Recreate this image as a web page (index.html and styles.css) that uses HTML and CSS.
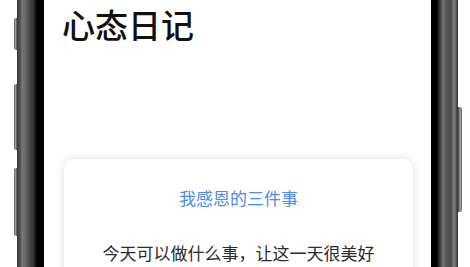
FILE: index.html
```html
<!DOCTYPE html>
<html lang="zh">
<head>
    <meta charset="UTF-8">
    <meta name="viewport" content="width=device-width, initial-scale=1.0">
    <title>心态日记</title>
    <link rel="stylesheet" href="styles.css">
</head>
<body>
    <div class="stage">
        <div class="side-btns left">
            <span class="side-btn b1"></span>
            <span class="side-btn b2"></span>
            <span class="side-btn b3"></span>
        </div>
        <div class="bezel bezel-left"></div>

        <div class="screen">
            <h1 class="title">心态日记</h1>

            <div class="card">
                <div class="card-head">我感恩的三件事</div>
                <div class="card-line">今天可以做什么事，让这一天很美好</div>
            </div>
        </div>

        <div class="bezel bezel-right"></div>
        <div class="side-btns right">
            <span class="side-btn r1"></span>
        </div>
    </div>
</body>
</html>
```

FILE: styles.css
```css
* {
    box-sizing: border-box;
    margin: 0;
    padding: 0;
}

body {
    width: 470px;
    height: 267px;
    overflow: hidden;
    background: #fff;
    font-family: "Noto Sans CJK SC", "Noto Sans", sans-serif;
}

.stage {
    display: flex;
    height: 267px;
    padding-left: 14px;
}

/* боковые кнопки телефона */
.side-btns {
    width: 3px;
    display: flex;
    flex-direction: column;
}

.side-btns.right {
    width: 4px;
}

.side-btn {
    display: block;
    width: 100%;
    background: linear-gradient(90deg, #5a5a5a, #9a9a9a 50%, #4a4a4a);
    border-radius: 2px 0 0 2px;
}

.side-btns.right .side-btn {
    border-radius: 0 2px 2px 0;
    background: linear-gradient(90deg, #3a3a3a, #a0a0a0 50%, #6a6a6a);
}

.b1 { margin-top: 18px; height: 32px; }
.b2 { margin-top: 34px; height: 66px; }
.b3 { margin-top: 18px; height: 68px; }
.r1 { margin-top: 107px; height: 105px; }

.bezel {
    width: 27px;
}

.bezel-left {
    background: linear-gradient(90deg,
        #3c3c3c 0, #4e4e4e 3px, #767676 5px, #6a6a6a 8px,
        #4c4c4c 12px, #2e2e2e 17px, #0a0a0a 19px, #000 21px, #000 27px);
}

.bezel-right {
    background: linear-gradient(90deg,
        #000 0, #000 6px, #1a1a1a 7px, #3a3a3a 9px, #767676 12px,
        #5a5a5a 15px, #4a4a4a 20px, #848484 23px, #5a5a5a 25px, #2e2e2e 27px);
}

.screen {
    width: 387px;
    height: 267px;
    overflow: hidden;
    background: #fff;
    padding: 0 18px 0 20px;
}

.title {
    font-size: 33px;
    font-weight: 500;
    line-height: 48px;
    color: #111;
    margin-left: -2px;
}

.card {
    margin-top: 111px;
    height: 130px;
    padding-top: 27px;
    background: #fff;
    border-radius: 10px;
    box-shadow: 0 0 10px rgba(0, 0, 0, 0.13);
    text-align: center;
}

.card-head {
    font-size: 17px;
    line-height: 24px;
    color: #4a8af4;
}

.card-line {
    margin-top: 31px;
    font-size: 17px;
    line-height: 24px;
    color: #2b2b2b;
}
```
